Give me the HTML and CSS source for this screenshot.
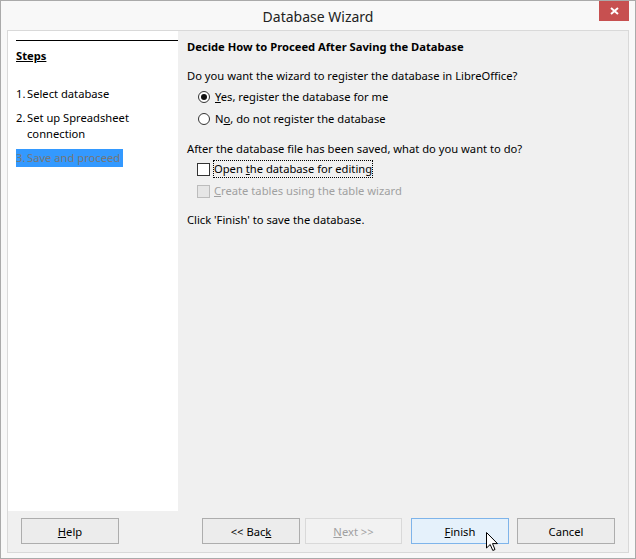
FILE: index.html
```html
<!DOCTYPE html>
<html lang="en">
<head>
    <meta charset="UTF-8">
    <title>Database Wizard</title>
    <link rel="stylesheet" href="styles.css">
</head>
<body>
<div class="window">
    <div class="titlebar">
        <span></span>
        <span class="title">Database Wizard</span>
        <span class="close-wrap">
            <span class="close">
                <svg width="9" height="8" viewBox="0 0 9 8"><path d="M1 1 L8 7 M8 1 L1 7" stroke="#fff" stroke-width="2"/></svg>
            </span>
        </span>
    </div>

    <div class="client">
        <div class="main">
            <div class="steps">
                <div class="steps-head">Steps</div>
                <div class="step-list">
                    <div class="step"><span class="num">1.</span><span>Select database</span></div>
                    <div class="step"><span class="num">2.</span><span>Set up Spreadsheet connection</span></div>
                    <div class="step current"><span class="num">3.</span><span>Save and proceed</span></div>
                </div>
            </div>

            <div class="page">
                <div class="page-title">Decide How to Proceed After Saving the Database</div>
                <p class="question">Do you want the wizard to register the database in LibreOffice?</p>
                <div class="option first-radio">
                    <span class="radio checked"></span>
                    <span><u>Y</u>es, register the database for me</span>
                </div>
                <div class="option">
                    <span class="radio"></span>
                    <span>N<u>o</u>, do not register the database</span>
                </div>
                <p class="question second">After the database file has been saved, what do you want to do?</p>
                <div class="option check-row first-check">
                    <span class="checkbox"></span>
                    <span class="focus">Open <u>t</u>he database for editing</span>
                </div>
                <div class="option check-row disabled">
                    <span class="checkbox"></span>
                    <span><u>C</u>reate tables using the table wizard</span>
                </div>
                <p class="question last">Click 'Finish' to save the database.</p>
            </div>
        </div>

        <div class="buttons">
            <button class="btn"><u>H</u>elp</button>
            <div class="nav">
                <button class="btn">&lt;&lt; Bac<u>k</u></button>
                <button class="btn off"><u>N</u>ext &gt;&gt;</button>
                <button class="btn default"><u>F</u>inish</button>
                <button class="btn cancel">Cancel</button>
            </div>
        </div>
    </div>

    <svg class="cursor" width="13" height="20" viewBox="0 0 13 20">
        <path d="M0.5 0.5 L0.5 16 L4.2 12.5 L6.8 18.5 L9 17.5 L6.5 11.6 L11.5 11.6 Z" fill="#fff" stroke="#000" stroke-width="1"/>
    </svg>
</div>
</body>
</html>
```

FILE: styles.css
```css
body {
    margin: 0;
    font-family: "Noto Sans", sans-serif;
    font-size: 11.2px;
    color: #000;
}

.window {
    position: relative;
    width: 636px;
    height: 559px;
    box-sizing: border-box;
    border: 1px solid #aaaaaa;
    background-color: #f8f8f8;
    display: flex;
    flex-direction: column;
}

.titlebar {
    height: 29px;
    display: grid;
    grid-template-columns: 1fr auto 1fr;
}

.title {
    font-size: 14px;
    color: #222;
    line-height: 29px;
    padding-top: 1px;
}

.close-wrap {
    display: flex;
    justify-content: flex-end;
    padding-right: 6px;
}

.close {
    width: 30px;
    height: 20px;
    background-color: #c75050;
    display: flex;
    align-items: center;
    justify-content: center;
}

.client {
    flex: 1;
    margin: 0 6px 5px 6px;
    border: 1px solid #d9d9d9;
    background-color: #f0f0f0;
    display: flex;
    flex-direction: column;
}

.main {
    height: 480px;
    display: flex;
}

.steps {
    width: 162px;
    background-color: #fff;
    padding-left: 8px;
    line-height: 16px;
}

.steps-head {
    margin-top: 9px;
    border-top: 1px solid #000;
    padding-top: 7px;
    font-weight: bold;
    text-decoration: underline;
}

.step-list {
    margin-top: 21px;
    display: flex;
    flex-direction: column;
    gap: 6px;
}

.step {
    display: flex;
    width: 130px;
    padding: 1px 0;
}

.step .num {
    width: 11px;
    flex-shrink: 0;
}

.step.current {
    width: fit-content;
    padding-right: 3px;
    background-color: #3399ff;
    color: #777;
}

.page {
    flex: 1;
    padding: 8px 0 0 9px;
    line-height: 16px;
}

.page-title {
    font-weight: bold;
}

.question {
    margin: 13px 0 0 0;
}

.question.second {
    margin-top: 14px;
}

.option {
    display: flex;
    align-items: center;
    gap: 5px;
    margin: 6px 0 0 11px;
}

.first-radio {
    margin-top: 5px;
}

.radio {
    width: 10px;
    height: 10px;
    border: 1px solid #333;
    border-radius: 50%;
    background-color: #fff;
    display: flex;
    align-items: center;
    justify-content: center;
}

.radio.checked::after {
    content: "";
    width: 6px;
    height: 6px;
    border-radius: 50%;
    background-color: #111;
}

.check-row {
    margin-left: 10px;
    gap: 4px;
}

.first-check {
    margin-top: 4px;
}

.checkbox {
    width: 11px;
    height: 11px;
    border: 1px solid #333;
    background-color: #fff;
}

.focus {
    outline: 1px dotted #000;
}

.disabled {
    color: #a0a0a0;
}

.disabled .checkbox {
    border-color: #bcbcbc;
    background-color: #e6e6e6;
}

.buttons {
    display: flex;
    justify-content: space-between;
    padding: 7px 13px 0 13px;
}

.nav {
    display: flex;
}

.btn {
    width: 98px;
    height: 26px;
    font-family: "Noto Sans", sans-serif;
    font-size: 11.2px;
    color: #000;
    background-color: #ececec;
    border: 1px solid #adadad;
    padding: 0;
}

.btn.off {
    width: 97px;
    margin-left: 5px;
    color: #a0a0a0;
    border-color: #d9d9d9;
    background-color: #f2f2f2;
}

.btn.default {
    margin-left: 9px;
    background-color: #e5f1fb;
    border-color: #7eb4ea;
}

.btn.cancel {
    margin-left: 8px;
}

.cursor {
    position: absolute;
    left: 485px;
    top: 531px;
}
```
